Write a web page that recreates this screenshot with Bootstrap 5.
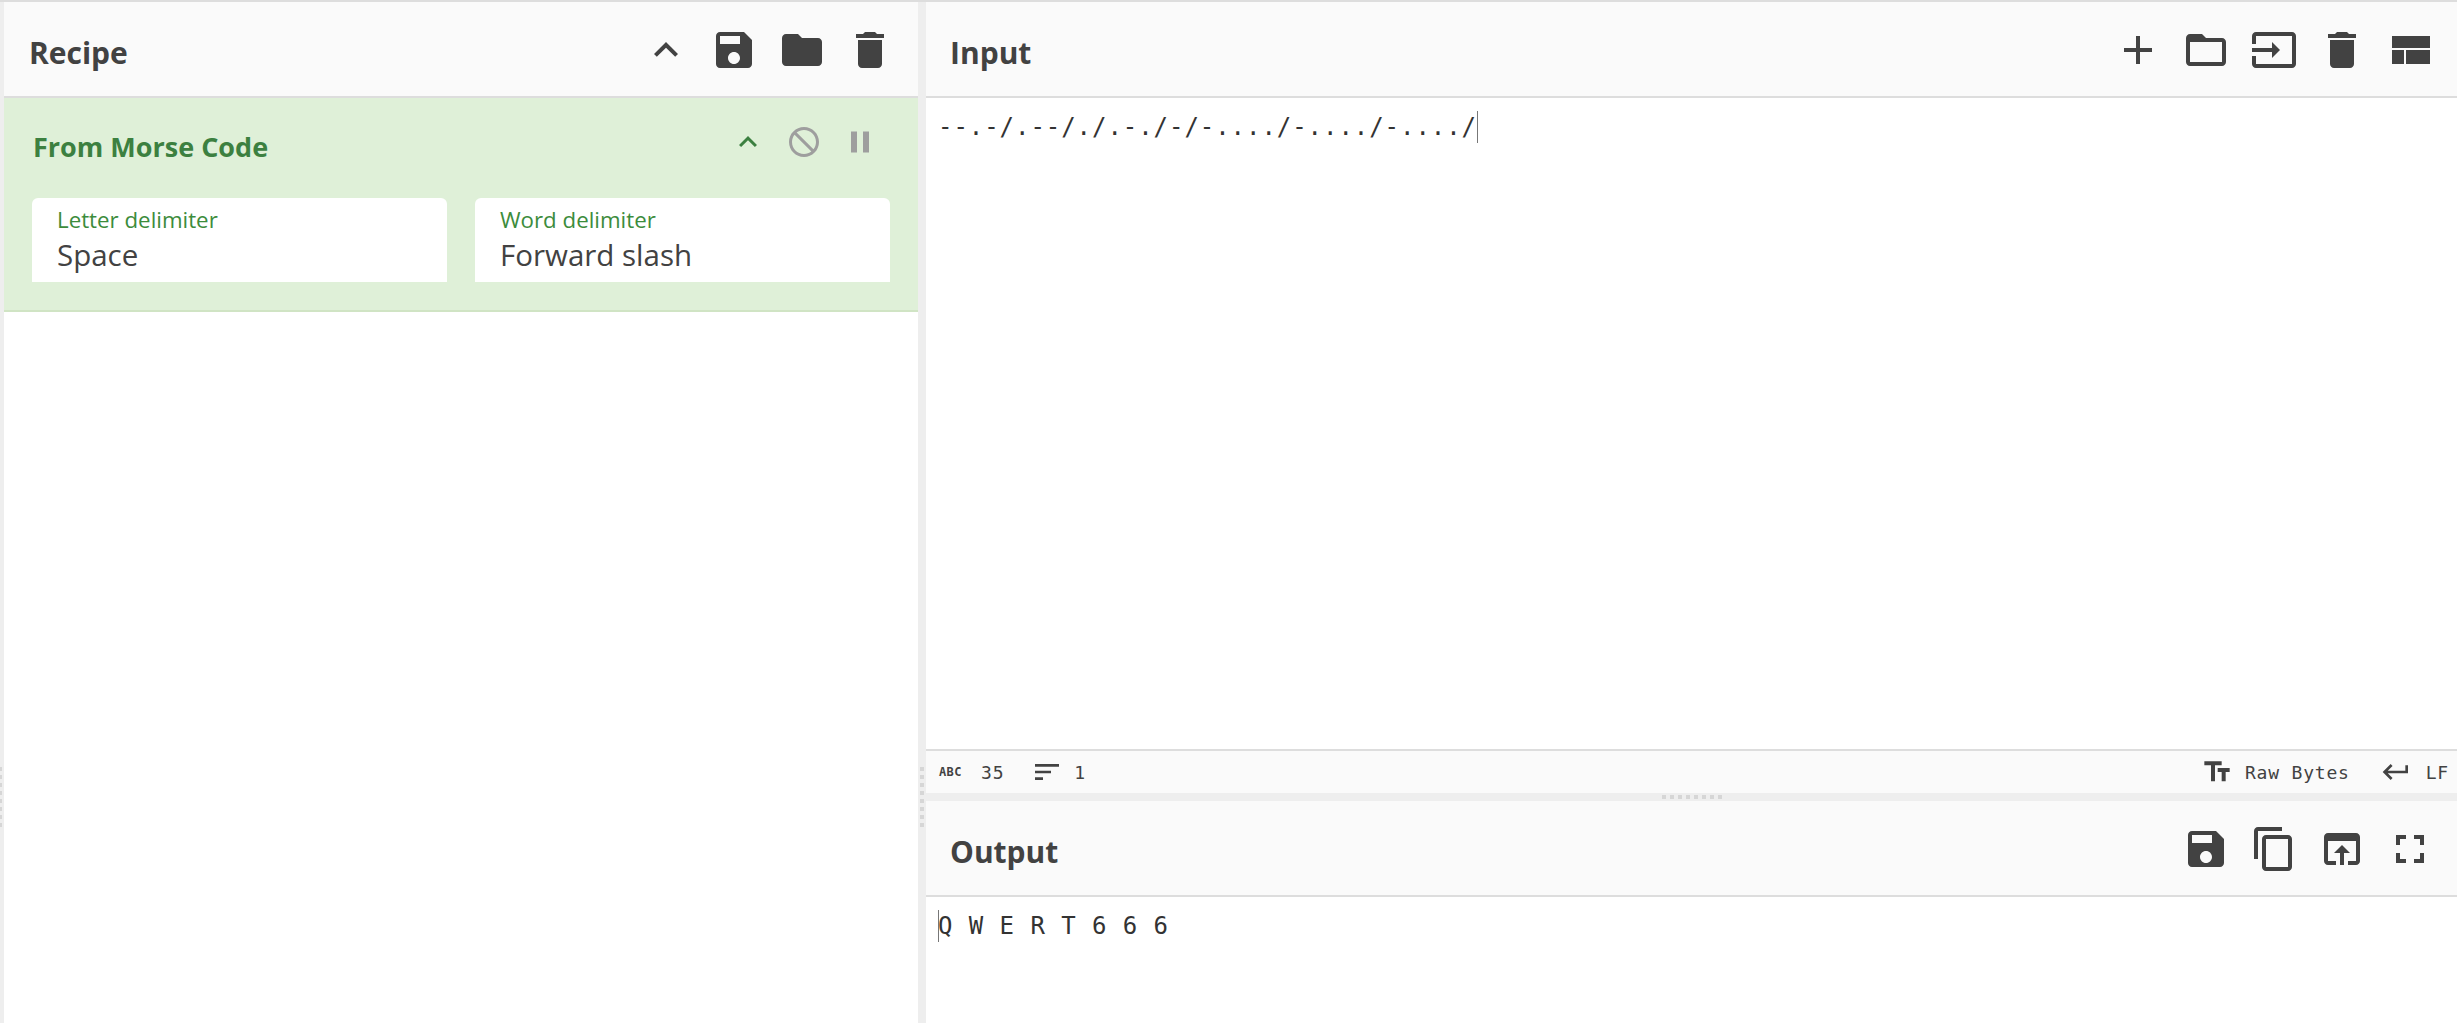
<!DOCTYPE html>
<html lang="en"><head><meta charset="utf-8"><title>CyberChef</title>
<link href="https://cdn.jsdelivr.net/npm/bootstrap@5.3.0/dist/css/bootstrap.min.css" rel="stylesheet">
<style>
html,body{height:100%;margin:0;overflow:hidden;background:#fff;}
body{font-family:"Open Sans","Noto Sans",sans-serif;color:#424242;}
.shell{height:1023px;border-top:2px solid #ddd;background:#eee;}
.leftbar{width:4px;background:#eee;position:relative;flex:none;}
.midbar{width:8px;background:#eee;position:relative;flex:none;}
.vgrip{position:absolute;left:2px;top:765px;width:4px;height:60px;background:repeating-linear-gradient(to bottom,#d6d6d6 0 4px,transparent 4px 8px);}
.leftbar .vgrip{left:0;width:2px;}
.recipepane{width:914px;flex:none;background:#fff;}
.rightpane{min-width:0;background:#fff;}
.headbar{height:96px;background:#fafafa;border-bottom:2px solid #ddd;flex:none;}
.headtitle{font-size:30px;font-weight:700;line-height:1;margin:0;color:#424242;position:relative;top:3px;}
.recipe-head{padding:2px 14px 0 25px;}
.input-head{padding:2px 13px 0 24px;}
.tool{width:68px;height:48px;flex:none;display:flex;justify-content:center;align-items:center;padding:0;background:none;border:0;}
.tool svg{width:48px;height:48px;fill:#424242;display:block;}
.opblock{background:#dff0d8;border-bottom:2px solid #d0e4c4;height:214px;padding:0 28px;flex:none;color:#3c763d;}
.optitle{height:100px;padding:0 0 0 1px;}
.optitle h2{font-size:27px;font-weight:700;margin:0;color:#3c8040;line-height:1;position:relative;top:-2px;}
.optool{width:56px;height:36px;display:flex;justify-content:center;align-items:center;flex:none;position:relative;top:-6px;}
.optool svg{width:36px;height:36px;display:block;}
.optools{margin-right:2px;}
.flipx{transform:scaleX(-1);}
.opfields{gap:28px;}
.field{width:415px;height:84px;background:#fff;border-radius:6px 6px 0 0;padding:9px 25px 0;}
.fieldlabel{font-size:22.3px;line-height:26px;color:#3c8c3c;}
.fieldvalue{font-size:29.5px;line-height:38px;color:#424242;margin-top:3px;}
.mono{font-family:"DejaVu Sans Mono","Liberation Mono",monospace;}
.editor{font-size:24px;letter-spacing:.95px;line-height:36px;color:#333;padding:11px 12px;white-space:pre;}
.output-pane{height:126px;flex:none;}
.caret{display:inline-block;width:1px;height:32px;background:#777;vertical-align:-8px;}
.caret-lead{margin-right:-1px;}
.statusbar{height:44px;background:#fafafa;border-top:2px solid #ddd;flex:none;font-size:18px;letter-spacing:.8px;color:#424242;padding:0 8px 0 13px;}
.statusbar svg{width:32px;height:32px;fill:#424242;display:block;flex:none;}
.abc{font-size:12px;font-weight:700;letter-spacing:.4px;width:28px;}
.hsplit{height:8px;background:#eee;flex:none;position:relative;}
.hgrip{position:absolute;left:736px;top:2px;width:60px;height:4px;background:repeating-linear-gradient(to right,#d6d6d6 0 4px,transparent 4px 8px);}
.stat-num{margin-left:14px;}
.gap-sort{margin-left:27px;margin-right:11px;}
.gap-tt{margin-right:12px;}
.gap-ret{margin-left:30px;margin-right:14px;}
</style></head>
<body>
<div class="shell d-flex">
  <div class="leftbar"><div class="vgrip"></div></div>
  <section class="recipepane d-flex flex-column">
    <div class="headbar recipe-head d-flex align-items-center justify-content-between">
      <h1 class="headtitle">Recipe</h1>
      <div class="d-flex">
        <button class="tool"><svg viewBox="0 0 24 24"><path d="M7.41 15.41L12 10.83l4.59 4.58L18 14l-6-6-6 6z"/></svg></button>
        <button class="tool"><svg viewBox="0 0 24 24"><path d="M17 3H5c-1.11 0-2 .9-2 2v14c0 1.1.89 2 2 2h14c1.1 0 2-.9 2-2V7l-4-4zm-5 16c-1.66 0-3-1.34-3-3s1.34-3 3-3 3 1.34 3 3-1.34 3-3 3zm3-10H5V5h10v4z"/></svg></button>
        <button class="tool"><svg viewBox="0 0 24 24"><path d="M10 4H4c-1.1 0-1.99.9-1.99 2L2 18c0 1.1.9 2 2 2h16c1.1 0 2-.9 2-2V8c0-1.1-.9-2-2-2h-8l-2-2z"/></svg></button>
        <button class="tool"><svg viewBox="0 0 24 24"><path d="M6 19c0 1.1.9 2 2 2h8c1.1 0 2-.9 2-2V7H6v12zM19 4h-3.5l-1-1h-5l-1 1H5v2h14V4z"/></svg></button>
      </div>
    </div>
    <div class="opblock">
      <div class="optitle d-flex align-items-center justify-content-between">
        <h2>From Morse Code</h2>
        <div class="d-flex optools">
          <span class="optool"><svg viewBox="0 0 24 24" fill="#3c8040"><path d="M7.41 15.41L12 10.83l4.59 4.58L18 14l-6-6-6 6z"/></svg></span>
          <span class="optool"><svg class="flipx" viewBox="0 0 24 24" fill="#9e9e9e"><path d="M12 2C6.48 2 2 6.48 2 12s4.48 10 10 10 10-4.48 10-10S17.52 2 12 2zM4 12c0-4.42 3.58-8 8-8 1.85 0 3.55.63 4.9 1.69L5.69 16.9C4.63 15.55 4 13.85 4 12zm8 8c-1.85 0-3.55-.63-4.9-1.69L18.31 7.1C19.37 8.45 20 10.15 20 12c0 4.42-3.58 8-8 8z"/></svg></span>
          <span class="optool"><svg viewBox="0 0 24 24" fill="#9e9e9e"><path d="M6 19h4V5H6v14zm8-14v14h4V5h-4z"/></svg></span>
        </div>
      </div>
      <div class="opfields d-flex">
        <div class="field"><div class="fieldlabel">Letter delimiter</div><div class="fieldvalue">Space</div></div>
        <div class="field"><div class="fieldlabel">Word delimiter</div><div class="fieldvalue">Forward slash</div></div>
      </div>
    </div>
  </section>
  <div class="midbar"><div class="vgrip"></div></div>
  <section class="rightpane flex-grow-1 d-flex flex-column">
    <div class="headbar input-head d-flex align-items-center justify-content-between">
      <h1 class="headtitle">Input</h1>
      <div class="d-flex">
        <button class="tool"><svg viewBox="0 0 24 24"><path d="M19 13h-6v6h-2v-6H5v-2h6V5h2v6h6v2z"/></svg></button>
        <button class="tool"><svg viewBox="0 0 24 24"><path d="M20 6h-8l-2-2H4c-1.1 0-1.99.9-1.99 2L2 18c0 1.1.9 2 2 2h16c1.1 0 2-.9 2-2V8c0-1.1-.9-2-2-2zm0 12H4V8h16v10z"/></svg></button>
        <button class="tool"><svg viewBox="0 0 24 24"><path d="M21 3.01H3c-1.1 0-2 .9-2 2V9h2V4.99h18v14.03H3V15H1v4.01c0 1.1.9 1.98 2 1.98h18c1.1 0 2-.88 2-1.98v-14c0-1.11-.9-2-2-2zM11 16l4-4-4-4v3H1v2h10v3z"/></svg></button>
        <button class="tool"><svg viewBox="0 0 24 24"><path d="M6 19c0 1.1.9 2 2 2h8c1.1 0 2-.9 2-2V7H6v12zM19 4h-3.5l-1-1h-5l-1 1H5v2h14V4z"/></svg></button>
        <button class="tool"><svg viewBox="0 0 24 24"><path d="M3 19h6v-7H3v7zm7 0h12v-7H10v7zM3 5v6h19V5H3z"/></svg></button>
      </div>
    </div>
    <div class="editor mono flex-grow-1">--.-/.--/./.-./-/-..../-..../-..../<span class="caret"></span></div>
    <div class="statusbar mono d-flex align-items-center justify-content-between">
      <div class="d-flex align-items-center">
        <span class="abc">ABC</span><span class="stat-num">35</span>
        <svg class="gap-sort" viewBox="0 0 24 24"><path d="M3 18h6v-2H3v2zM3 6v2h18V6H3zm0 7h12v-2H3v2z"/></svg><span>1</span>
      </div>
      <div class="d-flex align-items-center">
        <svg class="gap-tt" viewBox="0 0 24 24"><path d="M2.5 4v3h5v12h3V7h5V4h-13zm19 5h-9v3h3v7h3v-7h3V9z"/></svg><span>Raw Bytes</span>
        <svg class="gap-ret" viewBox="0 0 24 24"><path d="M19 7v4H5.83l3.58-3.59L8 6l-6 6 6 6 1.41-1.41L5.83 13H21V7z"/></svg><span>LF</span>
      </div>
    </div>
    <div class="hsplit"><div class="hgrip"></div></div>
    <div class="headbar input-head d-flex align-items-center justify-content-between">
      <h1 class="headtitle">Output</h1>
      <div class="d-flex">
        <button class="tool"><svg viewBox="0 0 24 24"><path d="M17 3H5c-1.11 0-2 .9-2 2v14c0 1.1.89 2 2 2h14c1.1 0 2-.9 2-2V7l-4-4zm-5 16c-1.66 0-3-1.34-3-3s1.34-3 3-3 3 1.34 3 3-1.34 3-3 3zm3-10H5V5h10v4z"/></svg></button>
        <button class="tool"><svg viewBox="0 0 24 24"><path d="M16 1H4c-1.1 0-2 .9-2 2v14h2V3h12V1zm3 4H8c-1.1 0-2 .9-2 2v14c0 1.1.9 2 2 2h11c1.1 0 2-.9 2-2V7c0-1.1-.9-2-2-2zm0 16H8V7h11v14z"/></svg></button>
        <button class="tool"><svg viewBox="0 0 24 24"><path d="M19 4H5c-1.11 0-2 .9-2 2v12c0 1.1.89 2 2 2h4v-2H5V8h14v10h-4v2h4c1.1 0 2-.9 2-2V6c0-1.1-.89-2-2-2zm-7 6l-4 4h3v6h2v-6h3l-4-4z"/></svg></button>
        <button class="tool"><svg viewBox="0 0 24 24"><path d="M7 14H5v5h5v-2H7v-3zm-2-4h2V7h3V5H5v5zm12 7h-3v2h5v-5h-2v3zM14 5v2h3v3h2V5h-5z"/></svg></button>
      </div>
    </div>
    <div class="editor mono output-pane"><span class="caret caret-lead"></span>Q W E R T 6 6 6</div>
  </section>
</div>
</body></html>
